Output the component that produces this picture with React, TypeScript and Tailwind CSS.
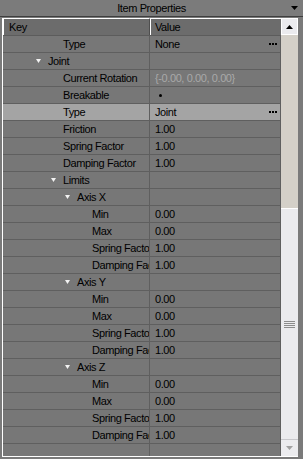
type Row = {
  label: string
  value?: string
  indent: string
  expand?: boolean
  selected?: boolean
  dots?: boolean
  bullet?: boolean
  disabled?: boolean
}

const axis = (name: string): Row[] => [
  { label: name, indent: 'pl-[62px]', expand: true },
  { label: 'Min', value: '0.00', indent: 'pl-[89px]' },
  { label: 'Max', value: '0.00', indent: 'pl-[89px]' },
  { label: 'Spring Factor', value: '1.00', indent: 'pl-[89px]' },
  { label: 'Damping Factor', value: '1.00', indent: 'pl-[89px]' },
]

const rows: Row[] = [
  { label: 'Type', value: 'None', indent: 'pl-[60px]', dots: true },
  { label: 'Joint', indent: 'pl-[33px]', expand: true },
  { label: 'Current Rotation', value: '{-0.00, 0.00, 0.00}', indent: 'pl-[60px]', disabled: true },
  { label: 'Breakable', indent: 'pl-[60px]', bullet: true },
  { label: 'Type', value: 'Joint', indent: 'pl-[60px]', selected: true, dots: true },
  { label: 'Friction', value: '1.00', indent: 'pl-[60px]' },
  { label: 'Spring Factor', value: '1.00', indent: 'pl-[60px]' },
  { label: 'Damping Factor', value: '1.00', indent: 'pl-[60px]' },
  { label: 'Limits', indent: 'pl-[48px]', expand: true },
  ...axis('Axis X'),
  ...axis('Axis Y'),
  ...axis('Axis Z'),
  { label: '', indent: '' },
]

export default function App() {
  return (
    <div className="relative h-[459px] w-[303px] overflow-hidden bg-[#7a7a7a] font-['Liberation_Sans',Arial,sans-serif] text-[11px] leading-none tracking-[-0.4px] text-black">
      <div className="relative flex h-[17px] items-center justify-center border-b border-[#3e3e3e] bg-[#7b7b7b]">
        <span>Item Properties</span>
        <svg viewBox="0 0 7 4" className="absolute right-[5px] top-[6px] h-[4px] w-[7px]">
          <path d="M0 0h7L3.5 4z" fill="#000" />
        </svg>
      </div>

      <div className="ml-[2px] mt-[1px] flex h-[439px] w-[296px] border-b border-l border-white">
        <div className="w-[278px] shrink-0 overflow-hidden">
          <div className="flex h-[18px] border-b border-[#5c5c5c] bg-[#6c6c6c]">
            <div className="flex w-[147px] shrink-0 items-center border-l border-t border-r border-l-white border-t-white border-r-[#4e4e4e] pl-[5px]">
              Key
            </div>
            <div className="flex w-[131px] shrink-0 items-center border-l border-t border-white pl-[4px]">
              Value
            </div>
          </div>
          {rows.map((r, i) => (
            <TreeRow key={i} row={r} />
          ))}
        </div>
        <Scrollbar />
      </div>
    </div>
  )
}

function TreeRow({ row }: { row: Row }) {
  return (
    <div
      className={`flex h-[17px] shrink-0 border-b border-[#5f5f5f] ${
        row.selected ? 'bg-[#a4a4a4]' : 'bg-[#777777]'
      }`}
    >
      <div
        className={`flex w-[147px] shrink-0 items-center overflow-hidden whitespace-nowrap border-r border-[#5f5f5f] ${row.indent}`}
      >
        {row.expand && (
          <span className="flex w-[12px] shrink-0 items-center">
            <svg viewBox="0 0 5 4" className="h-[4px] w-[5px]">
              <path d="M0 0h5L2.5 4z" fill="#f2f2f2" />
            </svg>
          </span>
        )}
        <span>{row.label}</span>
      </div>
      <div className="flex w-[131px] shrink-0 items-center justify-between border-r border-[#5f5f5f] pl-[5px] pr-[3px]">
        {row.bullet ? (
          <span className="ml-[4px] h-[3px] w-[3px] rounded-full bg-black" />
        ) : (
          <span className={`whitespace-nowrap ${row.disabled ? 'text-[#a9a9a9]' : ''}`}>{row.value}</span>
        )}
        {row.dots && (
          <span className="flex gap-[1px]">
            <span className="h-[2px] w-[2px] bg-black" />
            <span className="h-[2px] w-[2px] bg-black" />
            <span className="h-[2px] w-[2px] bg-black" />
          </span>
        )}
      </div>
    </div>
  )
}

function Scrollbar() {
  return (
    <div className="flex w-[17px] shrink-0 flex-col bg-[#d4d0c8]">
      <div className="flex h-[17px] shrink-0 items-center justify-center border border-white bg-[#ebebee]">
        <svg viewBox="0 0 7 4" className="h-[4px] w-[7px]">
          <path d="M0 4h7L3.5 0z" fill="#000" />
        </svg>
      </div>
      <div className="h-[173px] shrink-0" />
      <div className="flex h-[231px] shrink-0 flex-col items-center justify-center gap-[1px] border-t border-white bg-[#ebebee]">
        <span className="h-[1px] w-[11px] bg-[#8c8c8c]" />
        <span className="h-[1px] w-[11px] bg-[#8c8c8c]" />
        <span className="h-[1px] w-[11px] bg-[#8c8c8c]" />
        <span className="h-[1px] w-[11px] bg-[#8c8c8c]" />
      </div>
      <div className="flex h-[17px] shrink-0 items-center justify-center border-t border-[#c8c8cc] bg-[#ebebee]">
        <svg viewBox="0 0 7 4" className="h-[4px] w-[7px]">
          <path d="M0 0h7L3.5 4z" fill="#a0a0a0" />
        </svg>
      </div>
    </div>
  )
}
